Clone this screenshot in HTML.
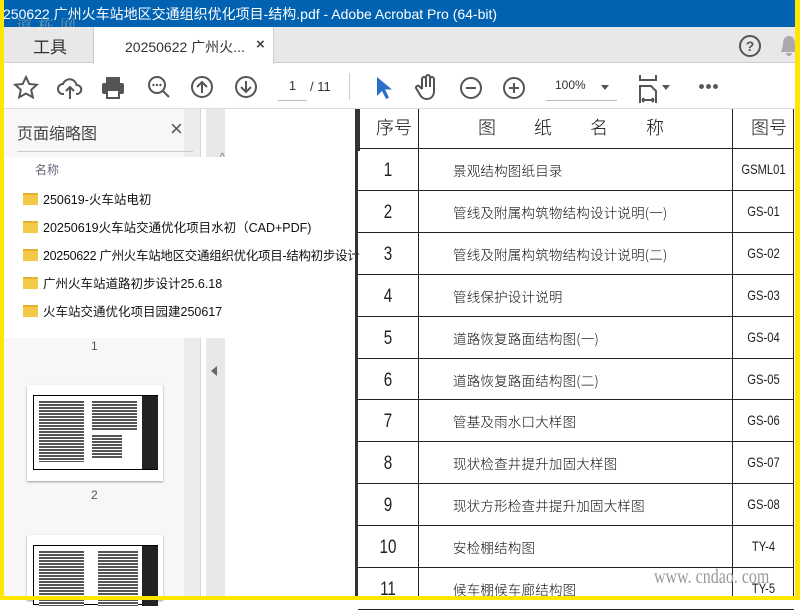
<!DOCTYPE html>
<html><head><meta charset="utf-8"><style>
*{margin:0;padding:0;box-sizing:border-box}
body{width:800px;height:600px;overflow:hidden;position:relative;background:#fff;font-family:"Liberation Sans","Noto Sans CJK SC",sans-serif}
.a{position:absolute}
.cad{font-family:"Noto Sans CJK SC",sans-serif;font-weight:300;color:#111}
.num{font-family:"Liberation Sans",sans-serif;color:#222;font-weight:normal;transform:scaleX(.8)}
.ic{stroke:#555;fill:none;stroke-width:2}
.th{position:absolute;background:repeating-linear-gradient(#fff 0 1px,#555 1px 3px)}
</style></head><body>
<div class="a" style="left:0;top:0;width:800px;height:27px;background:#0062b1"></div>
<div class="a" style="left:3px;top:4px;color:#fff;font-size:14px;white-space:nowrap">250622 广州火车站地区交通组织优化项目-结构.pdf - Adobe Acrobat Pro (64-bit)</div>
<div class="a" style="left:16px;top:13px;color:#9aa;font-size:16px;letter-spacing:6px;opacity:.7;font-family:'Noto Serif CJK SC',serif">道栋网</div>
<div class="a" style="left:0;top:27px;width:800px;height:36px;background:#e8e8e8;border-bottom:1px solid #ccc"></div>
<div class="a" style="left:33px;top:33px;font-size:17px;color:#333">工具</div>
<div class="a" style="left:93px;top:27px;width:181px;height:37px;background:#fff;border-left:1px solid #ccc;border-right:1px solid #ccc"></div>
<div class="a" style="left:125px;top:37px;font-size:14px;color:#333">20250622 广州火...</div>
<div class="a" style="left:256px;top:36px;font-size:15px;color:#444;font-weight:bold">×</div>
<svg class="a" style="left:738px;top:34px" width="24" height="24"><circle cx="12" cy="12" r="10" class="ic"/><text x="12" y="17" text-anchor="middle" font-size="14" font-weight="bold" fill="#555" font-family="Liberation Sans">?</text></svg>
<svg class="a" style="left:781px;top:34px" width="16" height="24"><path d="M8 2c-5 0-6 5-6 9l-2 7h16l-2-7c0-4-1-9-6-9zM5 19a3 3 0 0 0 6 0z" fill="#aaa"/></svg>
<div class="a" style="left:0;top:108px;width:800px;height:1px;background:#ddd"></div>
<svg class="a" style="left:13px;top:75px" width="26" height="26"><path d="M13 2l3.3 7 7.5.8-5.6 5 1.6 7.5L13 18.5 6.2 22.3l1.6-7.5-5.6-5 7.5-.8z" class="ic"/></svg>
<svg class="a" style="left:57px;top:75px" width="26" height="26"><path d="M7 19H6a5 5 0 0 1 0-10 7 7 0 0 1 13.5 1A4.5 4.5 0 0 1 20 19h-1M13 24V12m-4 4l4-4 4 4" class="ic"/></svg>
<svg class="a" style="left:100px;top:75px" width="26" height="26"><rect x="6" y="2" width="14" height="6" fill="#555"/><rect x="2" y="8" width="22" height="11" rx="2" fill="#555"/><rect x="7" y="15" width="12" height="8" fill="#fff" stroke="#555" stroke-width="2"/></svg>
<svg class="a" style="left:146px;top:74px" width="26" height="26"><circle cx="11" cy="11" r="8" class="ic"/><path d="M17 17l6 6" class="ic" stroke-width="3"/><circle cx="7.5" cy="11" r="1.2" fill="#555"/><circle cx="11" cy="11" r="1.2" fill="#555"/><circle cx="14.5" cy="11" r="1.2" fill="#555"/></svg>
<svg class="a" style="left:190px;top:75px" width="24" height="24"><circle cx="12" cy="12" r="10" class="ic" stroke="#bbb"/><path d="M12 18V7m-5 5l5-5 5 5" class="ic" stroke="#bbb"/></svg>
<svg class="a" style="left:234px;top:75px" width="24" height="24"><circle cx="12" cy="12" r="10" class="ic"/><path d="M12 6v11m-5-5l5 5 5-5" class="ic"/></svg>
<div class="a" style="left:278px;top:78px;width:29px;height:23px;border-bottom:1px solid #bbb;font-size:13px;color:#333;text-align:center">1</div>
<div class="a" style="left:310px;top:79px;font-size:13px;color:#333">/ 11</div>
<div class="a" style="left:349px;top:73px;width:1px;height:27px;background:#ccc"></div>
<svg class="a" style="left:373px;top:75px" width="20" height="26"><path d="M4 2v19l5-5 4 8 3-1.5-4-8h7z" fill="#2b6fc9"/></svg>
<svg class="a" style="left:414px;top:74px" width="26" height="28"><path d="M8 15V5a2 2 0 0 1 4 0v8V3a2 2 0 0 1 4 0v10V5a2 2 0 0 1 4 0v12c0 5-3 8-7 8s-6-2-8-6l-3-5a2 2 0 0 1 3-2l3 3" class="ic"/></svg>
<svg class="a" style="left:459px;top:76px" width="24" height="24"><circle cx="12" cy="12" r="10" class="ic"/><path d="M7 12h10" class="ic"/></svg>
<svg class="a" style="left:502px;top:76px" width="24" height="24"><circle cx="12" cy="12" r="10" class="ic"/><path d="M7 12h10M12 7v10" class="ic"/></svg>
<div class="a" style="left:546px;top:78px;width:71px;height:23px;border-bottom:1px solid #bbb;font-size:12px;color:#333;padding-left:9px">100%</div>
<div class="a" style="left:601px;top:85px;border:4px solid transparent;border-top:5px solid #555"></div>
<svg class="a" style="left:638px;top:74px" width="24" height="30"><path d="M2 1v5h16V1M2 29V12h11l5 5v12M4 26h12M4 26l2-2m-2 2l2 2m10-2l-2-2m2 2l-2 2" class="ic" stroke-width="1.8"/></svg>
<div class="a" style="left:662px;top:85px;border:4px solid transparent;border-top:5px solid #555"></div>
<div class="a" style="left:698px;top:84px;width:20px;height:5px;background:radial-gradient(circle,#555 2.2px,transparent 2.6px) 0 0/7px 5px"></div>
<div class="a" style="left:0;top:109px;width:200px;height:491px;background:#f7f7f7"></div>
<div class="a" style="left:184px;top:109px;width:16px;height:491px;background:#ececec"></div>
<div class="a" style="left:200px;top:109px;width:6px;height:491px;background:#fff;border-left:1px solid #d8d8d8"></div>
<div class="a" style="left:206px;top:109px;width:19px;height:491px;background:#e8e8e8"></div>
<div class="a" style="left:211px;top:366px;border:5px solid transparent;border-right:6px solid #666;border-left:0"></div>
<div class="a" style="left:17px;top:120px;font-size:16px;color:#444">页面缩略图</div>
<div class="a" style="left:170px;top:116px;font-size:22px;color:#555">×</div>
<div class="a" style="left:17px;top:151px;width:176px;height:1px;background:#ccc"></div>
<div class="a" style="left:4px;top:157px;width:355px;height:181px;background:#fff"></div>
<div class="a" style="left:220px;top:152px;font-size:10px;color:#666">^</div>
<div class="a" style="left:35px;top:161px;font-size:12px;color:#667">名称</div>
<div class="a" style="left:23px;top:186px;font-size:12.5px;color:#111;line-height:28px;white-space:nowrap">
<div><span style="display:inline-block;width:15px;height:12px;background:#f3c94a;border-top:2px solid #e5b030;margin-right:5px;vertical-align:-1px"></span>250619-火车站电初</div>
<div><span style="display:inline-block;width:15px;height:12px;background:#f3c94a;border-top:2px solid #e5b030;margin-right:5px;vertical-align:-1px"></span>20250619火车站交通优化项目水初（CAD+PDF)</div>
<div style="letter-spacing:-.3px"><span style="display:inline-block;width:15px;height:12px;background:#f3c94a;border-top:2px solid #e5b030;margin-right:5px;vertical-align:-1px"></span>20250622 广州火车站地区交通组织优化项目-结构初步设计</div>
<div><span style="display:inline-block;width:15px;height:12px;background:#f3c94a;border-top:2px solid #e5b030;margin-right:5px;vertical-align:-1px"></span>广州火车站道路初步设计25.6.18</div>
<div><span style="display:inline-block;width:15px;height:12px;background:#f3c94a;border-top:2px solid #e5b030;margin-right:5px;vertical-align:-1px"></span>火车站交通优化项目园建250617</div>
</div>
<div class="a" style="left:91px;top:339px;font-size:12px;color:#555">1</div>
<div class="a" style="left:27px;top:385px;width:136px;height:96px;background:#fff;box-shadow:0 1px 2px #999">
<div class="a" style="left:6px;top:10px;width:125px;height:75px;border:1px solid #000;background:#fff">
<div class="th" style="left:5px;top:4px;width:45px;height:62px"></div>
<div class="th" style="left:58px;top:4px;width:45px;height:30px"></div>
<div class="th" style="left:58px;top:38px;width:30px;height:25px"></div>
<div class="a" style="left:108px;top:0;width:16px;height:73px;background:#222"></div></div></div>
<div class="a" style="left:91px;top:488px;font-size:12px;color:#555">2</div>
<div class="a" style="left:27px;top:535px;width:136px;height:65px;background:#fff;box-shadow:0 1px 2px #999">
<div class="a" style="left:6px;top:10px;width:125px;height:60px;border:1px solid #000;background:#fff">
<div class="th" style="left:5px;top:4px;width:45px;height:56px"></div>
<div class="th" style="left:64px;top:4px;width:40px;height:56px"></div>
<div class="a" style="left:108px;top:0;width:16px;height:60px;background:#222"></div></div></div>
<div class="a" style="left:355px;top:109px;width:3px;height:491px;background:#333"></div>
<div class="a" style="left:358px;top:109px;width:2px;height:42px;background:#333"></div>
<div class="a" style="left:418px;top:109px;width:1px;height:491px;background:#222"></div>
<div class="a" style="left:732px;top:109px;width:1px;height:491px;background:#222"></div>
<div class="a" style="left:793px;top:109px;width:1px;height:491px;background:#222"></div>
<div class="a cad" style="left:376px;top:114px;font-size:18px">序号</div>
<div class="a cad" style="left:478px;top:114px;font-size:18px;letter-spacing:38px">图纸名称</div>
<div class="a cad" style="left:751px;top:114px;font-size:18px">图号</div>
<div class="a" style="left:358px;top:148px;width:436px;height:1px;background:#222"></div>
<div id="rows"></div>
<div class="a" style="left:654px;top:566px;font-size:20px;color:#999;font-family:'Liberation Serif',serif;transform:scaleX(.8);transform-origin:left">www. cndao. com</div>
<div class="a" style="left:0;top:0;width:4px;height:600px;background:#ffe600"></div>
<div class="a" style="left:795px;top:0;width:5px;height:600px;background:#ffe600"></div>
<div class="a" style="left:0;top:596px;width:800px;height:4px;background:#ffe600"></div>
<script>
var d=[["1","景观结构图纸目录","GSML01"],["2","管线及附属构筑物结构设计说明(一)","GS-01"],["3","管线及附属构筑物结构设计说明(二)","GS-02"],["4","管线保护设计说明","GS-03"],["5","道路恢复路面结构图(一)","GS-04"],["6","道路恢复路面结构图(二)","GS-05"],["7","管基及雨水口大样图","GS-06"],["8","现状检查井提升加固大样图","GS-07"],["9","现状方形检查井提升加固大样图","GS-08"],["10","安检棚结构图","TY-4"],["11","候车棚候车廊结构图","TY-5"]];
var h="";d.forEach(function(r,i){var y=148+i*41.9;
h+='<div class="a num" style="left:358px;top:'+(y+12)+'px;width:60px;text-align:center;font-size:19px">'+r[0]+'</div>';
h+='<div class="a cad" style="left:453px;top:'+(y+12)+'px;font-size:13.5px;letter-spacing:.2px">'+r[1]+'</div>';
h+='<div class="a num" style="left:733px;top:'+(y+13)+'px;width:61px;text-align:center;font-size:14px">'+r[2]+'</div>';
h+='<div class="a" style="left:358px;top:'+Math.round(y+41.9)+'px;width:436px;height:1px;background:#222"></div>';});
document.getElementById("rows").outerHTML=h;
</script>
</body></html>
